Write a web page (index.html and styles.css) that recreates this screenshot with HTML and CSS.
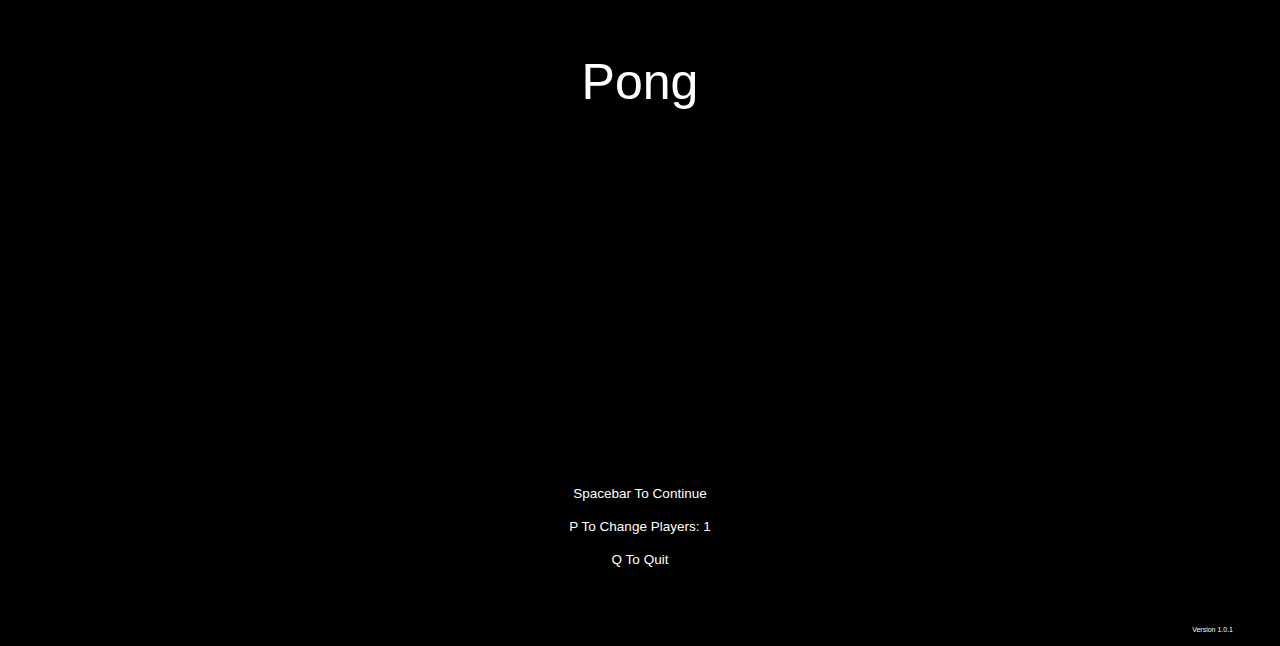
FILE: index.html
```html
<!DOCTYPE html>
<html lang="en">
<head>
<meta charset="utf-8">
<title>Pong</title>
<link rel="stylesheet" href="styles.css">
</head>
<body>
<main class="screen">
  <h1 class="title">Pong</h1>
  <ul class="menu">
    <li class="menu-item">Spacebar To Continue</li>
    <li class="menu-item">P To Change Players: 1</li>
    <li class="menu-item">Q To Quit</li>
  </ul>
  <div class="version">Version 1.0.1</div>
</main>
</body>
</html>
```
FILE: styles.css
```css
html, body {
  margin: 0;
  padding: 0;
  background: #000;
}
body {
  font-family: "Liberation Sans", Arial, sans-serif;
  color: #fff;
}
.screen {
  height: 646px;
  box-sizing: border-box;
  display: flex;
  flex-direction: column;
  padding-top: 57px;
}
.title {
  margin: 0;
  font-size: 50px;
  line-height: 50px;
  font-weight: normal;
  text-align: center;
}
.menu {
  list-style: none;
  margin: 380px 0 0 0;
  padding: 0;
  display: flex;
  flex-direction: column;
  gap: 20px;
  align-items: center;
}
.menu-item {
  font-size: 13.5px;
  line-height: 13px;
}
.version {
  margin-top: 59.5px;
  align-self: flex-end;
  margin-right: 47px;
  font-size: 7px;
  line-height: 7px;
}
```
